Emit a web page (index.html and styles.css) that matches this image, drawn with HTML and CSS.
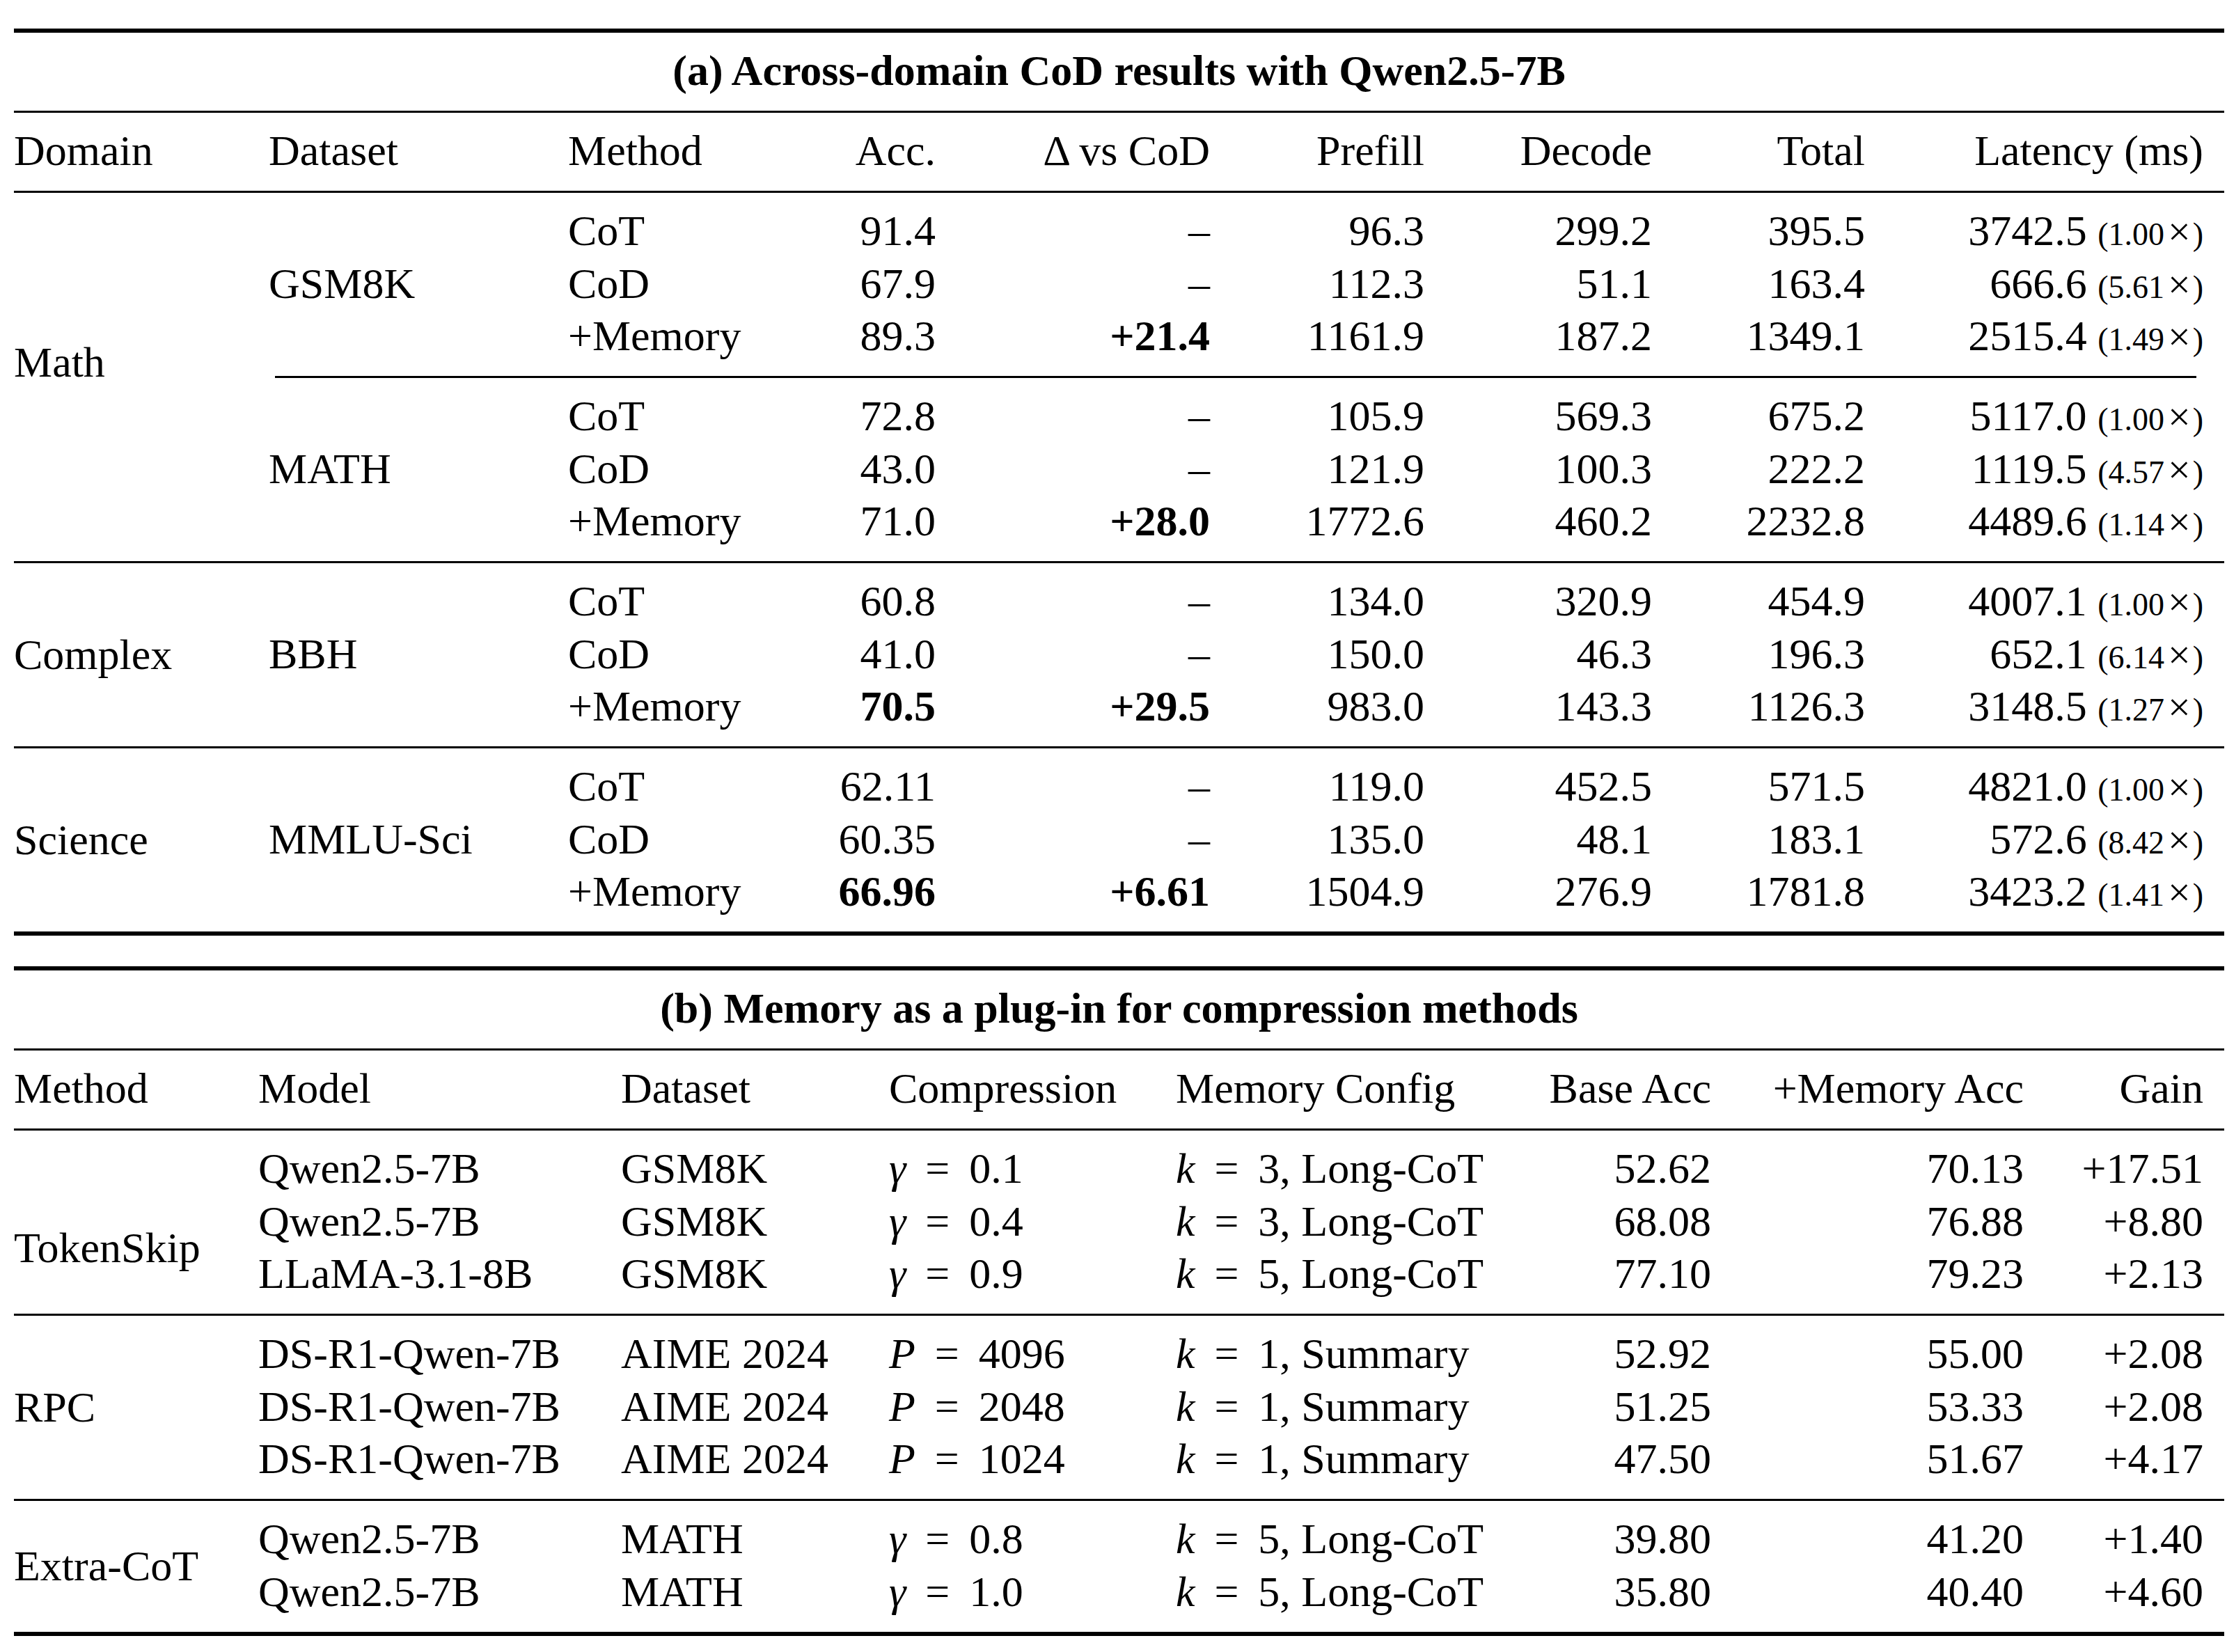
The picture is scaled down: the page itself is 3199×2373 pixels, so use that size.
FILE: index.html
```
<!DOCTYPE html>
<html lang="en">
<head>
    <meta charset="UTF-8">
    <title>CoD results and Memory plug-in</title>
    <link rel="stylesheet" href="styles.css">
</head>
<body>

<div class="page">

    <!-- (a) Across-domain results -->
    <section class="table table-a">
        <div class="rule heavy"></div>
        <div class="caption">(a) Across-domain CoD results with Qwen2.5-7B</div>
        <div class="rule"></div>
        <div class="head cols-a">
            <span>Domain</span><span>Dataset</span><span>Method</span>
            <span class="r">Acc.</span><span class="r">&Delta; vs CoD</span>
            <span class="r">Prefill</span><span class="r">Decode</span><span class="r">Total</span>
            <span class="r">Latency (ms)</span>
        </div>
        <div class="rule"></div>

        <div class="domain">
            <div class="dlabel lift">Math</div>
            <div class="dbody">
                <div class="dsgroup">
                    <div class="slabel">GSM8K</div>
                    <div class="rows">
                        <span>CoT</span><span>91.4</span><span>&ndash;</span><span>96.3</span><span>299.2</span><span>395.5</span><span>3742.5 <em class="ratio">(1.00<b>&times;</b>)</em></span>
                        <span>CoD</span><span>67.9</span><span>&ndash;</span><span>112.3</span><span>51.1</span><span>163.4</span><span>666.6 <em class="ratio">(5.61<b>&times;</b>)</em></span>
                        <span>+Memory</span><span>89.3</span><span class="bold">+21.4</span><span>1161.9</span><span>187.2</span><span>1349.1</span><span>2515.4 <em class="ratio">(1.49<b>&times;</b>)</em></span>
                    </div>
                </div>
                <div class="cmidrule"></div>
                <div class="dsgroup">
                    <div class="slabel">MATH</div>
                    <div class="rows">
                        <span>CoT</span><span>72.8</span><span>&ndash;</span><span>105.9</span><span>569.3</span><span>675.2</span><span>5117.0 <em class="ratio">(1.00<b>&times;</b>)</em></span>
                        <span>CoD</span><span>43.0</span><span>&ndash;</span><span>121.9</span><span>100.3</span><span>222.2</span><span>1119.5 <em class="ratio">(4.57<b>&times;</b>)</em></span>
                        <span>+Memory</span><span>71.0</span><span class="bold">+28.0</span><span>1772.6</span><span>460.2</span><span>2232.8</span><span>4489.6 <em class="ratio">(1.14<b>&times;</b>)</em></span>
                    </div>
                </div>
            </div>
        </div>
        <div class="rule"></div>

        <div class="domain">
            <div class="dlabel">Complex</div>
            <div class="dbody">
                <div class="dsgroup">
                    <div class="slabel">BBH</div>
                    <div class="rows">
                        <span>CoT</span><span>60.8</span><span>&ndash;</span><span>134.0</span><span>320.9</span><span>454.9</span><span>4007.1 <em class="ratio">(1.00<b>&times;</b>)</em></span>
                        <span>CoD</span><span>41.0</span><span>&ndash;</span><span>150.0</span><span>46.3</span><span>196.3</span><span>652.1 <em class="ratio">(6.14<b>&times;</b>)</em></span>
                        <span>+Memory</span><span class="bold">70.5</span><span class="bold">+29.5</span><span>983.0</span><span>143.3</span><span>1126.3</span><span>3148.5 <em class="ratio">(1.27<b>&times;</b>)</em></span>
                    </div>
                </div>
            </div>
        </div>
        <div class="rule"></div>

        <div class="domain">
            <div class="dlabel">Science</div>
            <div class="dbody">
                <div class="dsgroup">
                    <div class="slabel">MMLU-Sci</div>
                    <div class="rows">
                        <span>CoT</span><span>62.11</span><span>&ndash;</span><span>119.0</span><span>452.5</span><span>571.5</span><span>4821.0 <em class="ratio">(1.00<b>&times;</b>)</em></span>
                        <span>CoD</span><span>60.35</span><span>&ndash;</span><span>135.0</span><span>48.1</span><span>183.1</span><span>572.6 <em class="ratio">(8.42<b>&times;</b>)</em></span>
                        <span>+Memory</span><span class="bold">66.96</span><span class="bold">+6.61</span><span>1504.9</span><span>276.9</span><span>1781.8</span><span>3423.2 <em class="ratio">(1.41<b>&times;</b>)</em></span>
                    </div>
                </div>
            </div>
        </div>
        <div class="rule heavy"></div>
    </section>

    <!-- (b) Memory as a plug-in -->
    <section class="table table-b">
        <div class="rule heavy"></div>
        <div class="caption">(b) Memory as a plug-in for compression methods</div>
        <div class="rule"></div>
        <div class="head cols-b">
            <span>Method</span><span>Model</span><span>Dataset</span><span>Compression</span>
            <span>Memory Config</span><span class="r">Base Acc</span><span class="r">+Memory Acc</span><span class="r">Gain</span>
        </div>
        <div class="rule"></div>

        <div class="method">
            <div class="mlabel drop">TokenSkip</div>
            <div class="mrows">
                <span>Qwen2.5-7B</span><span>GSM8K</span><span><i>&gamma;</i><span class="eq">=</span>0.1</span><span><i>k</i><span class="eq">=</span>3, Long-CoT</span><span>52.62</span><span>70.13</span><span>+17.51</span>
                <span>Qwen2.5-7B</span><span>GSM8K</span><span><i>&gamma;</i><span class="eq">=</span>0.4</span><span><i>k</i><span class="eq">=</span>3, Long-CoT</span><span>68.08</span><span>76.88</span><span>+8.80</span>
                <span>LLaMA-3.1-8B</span><span>GSM8K</span><span><i>&gamma;</i><span class="eq">=</span>0.9</span><span><i>k</i><span class="eq">=</span>5, Long-CoT</span><span>77.10</span><span>79.23</span><span>+2.13</span>
            </div>
        </div>
        <div class="rule"></div>

        <div class="method">
            <div class="mlabel">RPC</div>
            <div class="mrows">
                <span>DS-R1-Qwen-7B</span><span>AIME 2024</span><span><i>P</i><span class="eq">=</span>4096</span><span><i>k</i><span class="eq">=</span>1, Summary</span><span>52.92</span><span>55.00</span><span>+2.08</span>
                <span>DS-R1-Qwen-7B</span><span>AIME 2024</span><span><i>P</i><span class="eq">=</span>2048</span><span><i>k</i><span class="eq">=</span>1, Summary</span><span>51.25</span><span>53.33</span><span>+2.08</span>
                <span>DS-R1-Qwen-7B</span><span>AIME 2024</span><span><i>P</i><span class="eq">=</span>1024</span><span><i>k</i><span class="eq">=</span>1, Summary</span><span>47.50</span><span>51.67</span><span>+4.17</span>
            </div>
        </div>
        <div class="rule"></div>

        <div class="method">
            <div class="mlabel">Extra-CoT</div>
            <div class="mrows">
                <span>Qwen2.5-7B</span><span>MATH</span><span><i>&gamma;</i><span class="eq">=</span>0.8</span><span><i>k</i><span class="eq">=</span>5, Long-CoT</span><span>39.80</span><span>41.20</span><span>+1.40</span>
                <span>Qwen2.5-7B</span><span>MATH</span><span><i>&gamma;</i><span class="eq">=</span>1.0</span><span><i>k</i><span class="eq">=</span>5, Long-CoT</span><span>35.80</span><span>40.40</span><span>+4.60</span>
            </div>
        </div>
        <div class="rule heavy"></div>
    </section>

</div>

</body>
</html>
```

FILE: styles.css
```
body {
    margin: 0;
    background-color: #fff;
    color: #000;
    font-family: 'Liberation Serif', 'Times New Roman', serif;
    font-size: 62px;
    line-height: 75.5px;
}
.page {
    width: 3175px;
    padding: 41px 0 0 20px;
}
.table-b {
    margin-top: 44px;
}
/* booktabs style rules */
.rule {
    height: 3px;
    background-color: #000;
}
.rule.heavy {
    height: 6px;
}
.cmidrule {
    height: 3px;
    background-color: #000;
    margin: 0 40px 0 9px;
}
.caption {
    text-align: center;
    font-weight: bold;
    padding: 17px 0 19.5px;
}
.head {
    display: grid;
    padding: 17px 30px 19.5px 0;
    white-space: nowrap;
}
.cols-a {
    grid-template-columns: 366px 430px 304px 224px 394px 308px 327px 306px 486px;
}
.cols-b {
    grid-template-columns: 351px 521px 385px 412px 431px 338px 449px 258px;
}
.r {
    text-align: right;
}
.bold {
    font-weight: bold;
}
/* table (a) body */
.domain {
    display: flex;
}
.dlabel {
    width: 366px;
    flex: none;
    display: flex;
    align-items: center;
}
.dlabel.lift {
    padding-bottom: 42px;
}
.dbody {
    flex: 1;
    display: flex;
    flex-direction: column;
}
.dsgroup {
    display: flex;
    padding: 17px 30px 19.5px 0;
}
.slabel {
    width: 430px;
    flex: none;
    display: flex;
    align-items: center;
}
.rows {
    display: grid;
    grid-template-columns: 304px 224px 394px 308px 327px 306px 486px;
    white-space: nowrap;
}
.rows > span {
    text-align: right;
}
.rows > span:nth-child(7n+1) {
    text-align: left;
}
.ratio {
    font-style: normal;
    font-size: 46px;
    line-height: 0;
}
.ratio b {
    font-weight: normal;
    font-size: 58px;
    margin: 0 3px 0 5px;
}
/* table (b) body */
.method {
    display: flex;
}
.mlabel {
    width: 351px;
    flex: none;
    display: flex;
    align-items: center;
}
.mlabel.drop {
    padding-top: 74px;
}
.mrows {
    flex: 1;
    display: grid;
    grid-template-columns: 521px 385px 412px 431px 338px 449px 258px;
    padding: 17px 30px 19.5px 0;
    white-space: nowrap;
}
.mrows > span:nth-child(7n+5),
.mrows > span:nth-child(7n+6),
.mrows > span:nth-child(7n) {
    text-align: right;
}
.eq {
    margin: 0 0.45em;
}
```
